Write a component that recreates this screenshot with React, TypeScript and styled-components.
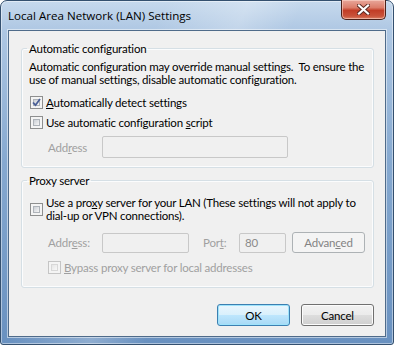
import React from "react";
import styled, { createGlobalStyle, css } from "styled-components";

const GlobalStyle = createGlobalStyle`
  html, body { margin: 0; padding: 0; background: #ffffff; }
  body { font-family: Lato, "Open Sans", sans-serif; font-size: 11.5px; letter-spacing: -0.2px; color: #000; }
  * { box-sizing: border-box; }
`;

const Window = styled.div`
  width: 394px;
  height: 345px;
  display: flex;
  flex-direction: column;
  padding: 0 7px 7px 7px;
  border: 1px solid #34506f;
  border-radius: 7px 7px 3px 3px;
  background:
    linear-gradient(115deg, rgba(255,255,255,0) 30%, rgba(255,255,255,0.25) 45%, rgba(255,255,255,0) 55%),
    linear-gradient(180deg, #c6d9ed 0px, #aec7e3 30px, #86a9d0 160px, #6991c0 100%);
  box-shadow: inset 0 0 0 1px rgba(255,255,255,0.45);
`;

const TitleBar = styled.div`
  height: 29px;
  flex: none;
  display: flex;
  align-items: flex-start;
  justify-content: space-between;
`;

const Title = styled.div`
  padding-top: 7px;
  font-family: "Open Sans", sans-serif;
  font-size: 11.6px;
  letter-spacing: 0;
  line-height: 16px;
  color: #000;
`;

const CloseButton = styled.div`
  width: 45px;
  height: 20px;
  margin-top: -1px;
  display: flex;
  align-items: center;
  justify-content: center;
  border: 1px solid #4b2119;
  border-top: none;
  border-radius: 0 0 5px 5px;
  background: linear-gradient(180deg, #e8a79b 0%, #dc7d6a 40%, #c23d26 55%, #c9533a 85%, #dc8266 100%);
  box-shadow: inset 0 0 0 1px rgba(255, 220, 210, 0.55);
`;

const Client = styled.div`
  flex: 1;
  display: flex;
  flex-direction: column;
  background: #f0f0f0;
  border: 1px solid #4f6b8a;
  box-shadow: 0 0 0 1px rgba(255,255,255,0.5);
  padding: 10px 11px 10px 12px;
`;

const Group = styled.fieldset<{ $gap?: number; $bottom?: number }>`
  margin: ${(p) => p.$gap ?? 0}px 0 0 0;
  padding: 4px 8px ${(p) => p.$bottom ?? 9}px 7px;
  border: 1px solid #d5dfe5;
  border-radius: 3px;
  box-shadow: inset 0 0 0 1px #fbfcfd;
  min-inline-size: 0;
  display: flex;
  flex-direction: column;
`;

const Legend = styled.legend`
  padding: 0 2px;
  margin-left: -2px;
  line-height: 15px;
`;

const Paragraph = styled.div`
  line-height: 13px;
  margin: 0;
  white-space: nowrap;
`;

const CheckRow = styled.label<{ $top: number; $indent?: number; $disabled?: boolean }>`
  display: flex;
  align-items: center;
  gap: 3px;
  margin-top: ${(p) => p.$top}px;
  margin-left: ${(p) => 1 + (p.$indent ?? 0)}px;
  line-height: 13px;
  white-space: nowrap;
  color: ${(p) => (p.$disabled ? "#a0a0a0" : "#000")};
`;

const Box = styled.span<{ $disabled?: boolean }>`
  width: 13px;
  height: 13px;
  flex: none;
  display: flex;
  align-items: center;
  justify-content: center;
  border: 1px solid ${(p) => (p.$disabled ? "#c5c5c5" : "#8e8f8f")};
  background: #f4f4f4;
  position: relative;
  &::before {
    content: "";
    position: absolute;
    inset: 2px;
    background: ${(p) =>
      p.$disabled
        ? "linear-gradient(135deg, #e6e6e6, #f8f8f8)"
        : "linear-gradient(135deg, #cbcfd5, #f6f6f6)"};
    border: 1px solid ${(p) => (p.$disabled ? "#d8d8d8" : "#aeb3b9")};
  }
  svg { position: relative; }
`;

const Key = styled.span`
  text-decoration: underline;
  text-underline-offset: 1px;
`;

const FieldRow = styled.div<{ $top: number }>`
  display: flex;
  align-items: center;
  margin-top: ${(p) => p.$top}px;
  margin-left: 19px;
  color: #a0a0a0;
  white-space: nowrap;
`;

const FieldLabel = styled.span<{ $width: number; $gap?: number }>`
  width: ${(p) => p.$width}px;
  margin-left: ${(p) => p.$gap ?? 0}px;
  flex: none;
`;

const Input = styled.div<{ $width: number; $height: number }>`
  width: ${(p) => p.$width}px;
  height: ${(p) => p.$height}px;
  flex: none;
  border: 1px solid #c8c8c8;
  border-radius: 2px;
  background: #f0f0f0;
  padding: 2px 0 0 5px;
  color: #8a8a8a;
  line-height: 14px;
`;

const buttonBase = css`
  height: 22px;
  border-radius: 3px;
  display: flex;
  align-items: center;
  justify-content: center;
  font-size: 11.5px;
  letter-spacing: -0.2px;
  font-family: inherit;
  padding: 0;
`;

const Button = styled.button<{ $default?: boolean }>`
  ${buttonBase};
  width: 73px;
  color: #000;
  border: 1px solid ${(p) => (p.$default ? "#3c7fb1" : "#707070")};
  background: ${(p) =>
    p.$default
      ? "linear-gradient(180deg, #eaf6fd 0%, #d9f0fc 50%, #bee6fd 51%, #a7d9f5 100%)"
      : "linear-gradient(180deg, #f2f2f2 0%, #ebebeb 50%, #dddddd 51%, #cfcfcf 100%)"};
  box-shadow: inset 0 0 0 1px ${(p) => (p.$default ? "#9ee3fb" : "#fcfcfc")};
`;

const DisabledButton = styled.button`
  ${buttonBase};
  width: 73px;
  height: 21px;
  margin-left: 6px;
  color: #838383;
  border: 1px solid #adb2b5;
  background: #f4f4f4;
`;

const Footer = styled.div`
  margin-top: auto;
  display: flex;
  justify-content: flex-end;
  gap: 11px;
`;

const Check = () => (
  <svg width="9" height="9" viewBox="0 0 9 9">
    <path d="M1 4.5 L3.5 7.2 L8 1" fill="none" stroke="#4a5f97" strokeWidth="1.8" />
  </svg>
);

const CloseGlyph = () => (
  <svg width="13" height="11" viewBox="0 0 13 11">
    <path d="M2 1.5 L11 9.5 M11 1.5 L2 9.5" stroke="#5a2a22" strokeWidth="4" strokeLinecap="square" />
    <path d="M2 1.5 L11 9.5 M11 1.5 L2 9.5" stroke="#ffffff" strokeWidth="2.2" strokeLinecap="square" />
  </svg>
);

export default function App() {
  return (
    <>
      <GlobalStyle />
      <Window>
        <TitleBar>
          <Title>Local Area Network (LAN) Settings</Title>
          <CloseButton>
            <CloseGlyph />
          </CloseButton>
        </TitleBar>
        <Client>
          <Group>
            <Legend>Automatic configuration</Legend>
            <Paragraph>
              Automatic configuration may override manual settings.&nbsp; To ensure the
              <br />
              use of manual settings, disable automatic configuration.
            </Paragraph>
            <CheckRow $top={10}>
              <Box>
                <Check />
              </Box>
              <span>
                <Key>A</Key>utomatically detect settings
              </span>
            </CheckRow>
            <CheckRow $top={7}>
              <Box />
              <span>
                Use automatic configuration <Key>s</Key>cript
              </span>
            </CheckRow>
            <FieldRow $top={7}>
              <FieldLabel $width={54}>
                Add<Key>r</Key>ess
              </FieldLabel>
              <Input $width={186} $height={22} />
            </FieldRow>
          </Group>
          <Group $gap={5} $bottom={13}>
            <Legend>Proxy server</Legend>
            <CheckRow $top={4}>
              <Box />
              <Paragraph>
                Use a pro<Key>x</Key>y server for your LAN (These settings will not apply to
                <br />
                dial-up or VPN connections).
              </Paragraph>
            </CheckRow>
            <FieldRow $top={10}>
              <FieldLabel $width={54}>
                Addr<Key>e</Key>ss:
              </FieldLabel>
              <Input $width={87} $height={20} />
              <FieldLabel $width={36} $gap={14}>
                Por<Key>t</Key>:
              </FieldLabel>
              <Input $width={47} $height={20}>80</Input>
              <DisabledButton disabled>
                Advan<Key>c</Key>ed
              </DisabledButton>
            </FieldRow>
            <CheckRow $top={8} $indent={18} $disabled>
              <Box $disabled />
              <span>
                <Key>B</Key>ypass proxy server for local addresses
              </span>
            </CheckRow>
          </Group>
          <Footer>
            <Button $default>OK</Button>
            <Button>Cancel</Button>
          </Footer>
        </Client>
      </Window>
    </>
  );
}
